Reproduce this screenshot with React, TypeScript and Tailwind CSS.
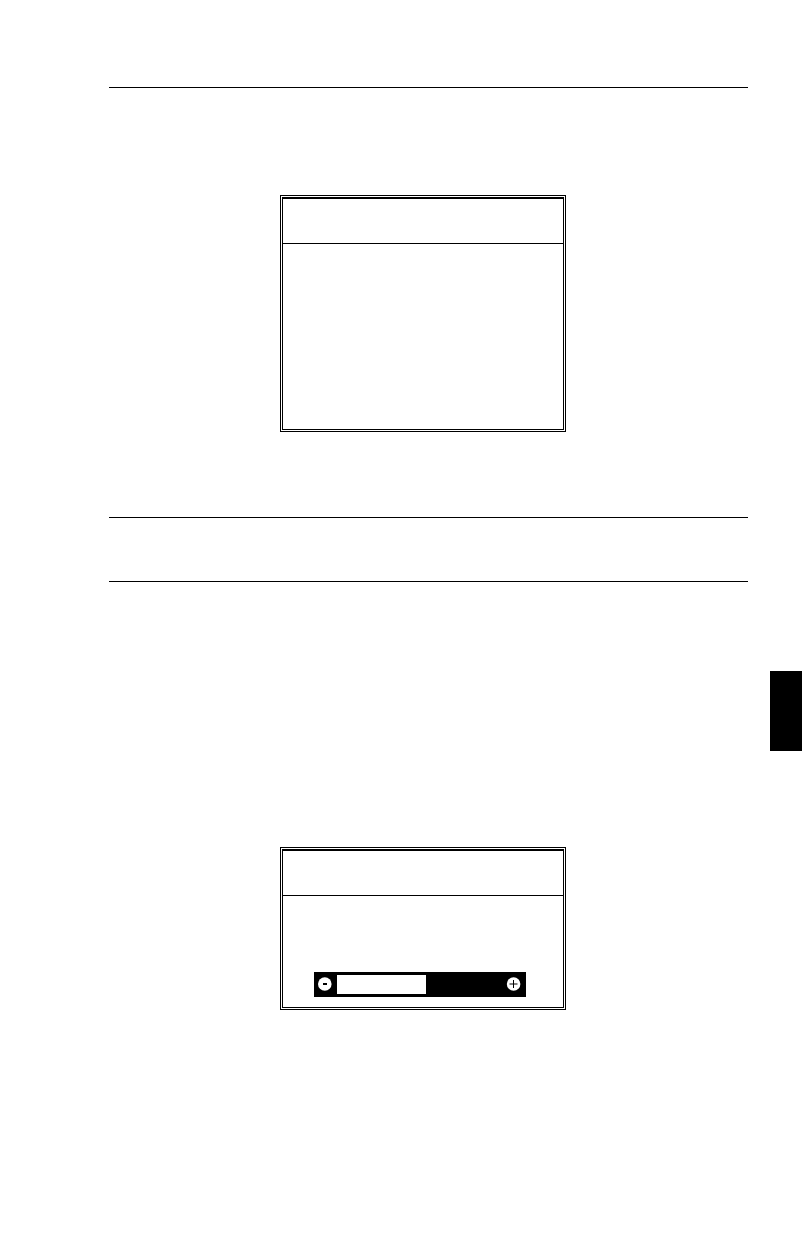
import { useState, type ReactNode } from "react";

type PanelProps = {
    children?: ReactNode
};

// Double framed on-screen menu with an empty title row
function MenuPanel(props: PanelProps) {
    return (
        <div className="ml-[171px] w-[286px] border border-black p-px">
            <div className="border border-t-2 border-black">
                <div className="h-[45px] border-b border-black" />
                {props.children}
            </div>
        </div>
    )
}

function LevelBar() {
    const [level, setLevel] = useState(54)

    return (
        <div className="flex h-[25px] items-center gap-1 bg-black pr-[5px] pl-1">
            <button
                type="button"
                aria-label="Decrease"
                onClick={() => setLevel(prev => Math.max(0, prev - 2))}
                className="cursor-pointer"
            >
                <svg className="block size-[15px]" viewBox="0 0 15 15">
                    <circle cx="6.8" cy="7" r="6.8" fill="white" />
                    <path d="M5 7h4" stroke="black" strokeWidth="2" />
                </svg>
            </button>

            <div
                role="meter"
                aria-label="Level"
                aria-valuemin={0}
                aria-valuemax={100}
                aria-valuenow={level}
                className="h-[19px] flex-1"
            >
                <div className="h-full bg-white" style={{ width: `${level}%` }} />
            </div>

            <button
                type="button"
                aria-label="Increase"
                onClick={() => setLevel(prev => Math.min(100, prev + 2))}
                className="cursor-pointer"
            >
                <svg className="block size-[15px]" viewBox="0 0 15 15">
                    <circle cx="7.6" cy="7" r="6.8" fill="white" />
                    <path d="M7.5 3v8" stroke="black" />
                    <path d="M3.5 7h8" stroke="black" />
                </svg>
            </button>
        </div>
    )
}

export default function App() {
    return (
        <div className="flex min-h-screen bg-white">
            <main className="ml-[109px] flex-1 pt-[87px] pb-56">
                <section className="border-t border-black pt-[107px] pb-[85px]">
                    <MenuPanel>
                        <div className="h-[185px]" />
                    </MenuPanel>
                </section>

                <section className="h-16 border-t border-black" />

                <section className="border-t border-black pt-[265px]">
                    <MenuPanel>
                        <div className="pt-[76px] pr-[37px] pb-[10px] pl-[31px]">
                            <LevelBar />
                        </div>
                    </MenuPanel>
                </section>
            </main>

            {/* Chapter thumb tab */}
            <aside className="mt-[671px] ml-[22px] h-20 w-8 bg-black" />
        </div>
    )
}
